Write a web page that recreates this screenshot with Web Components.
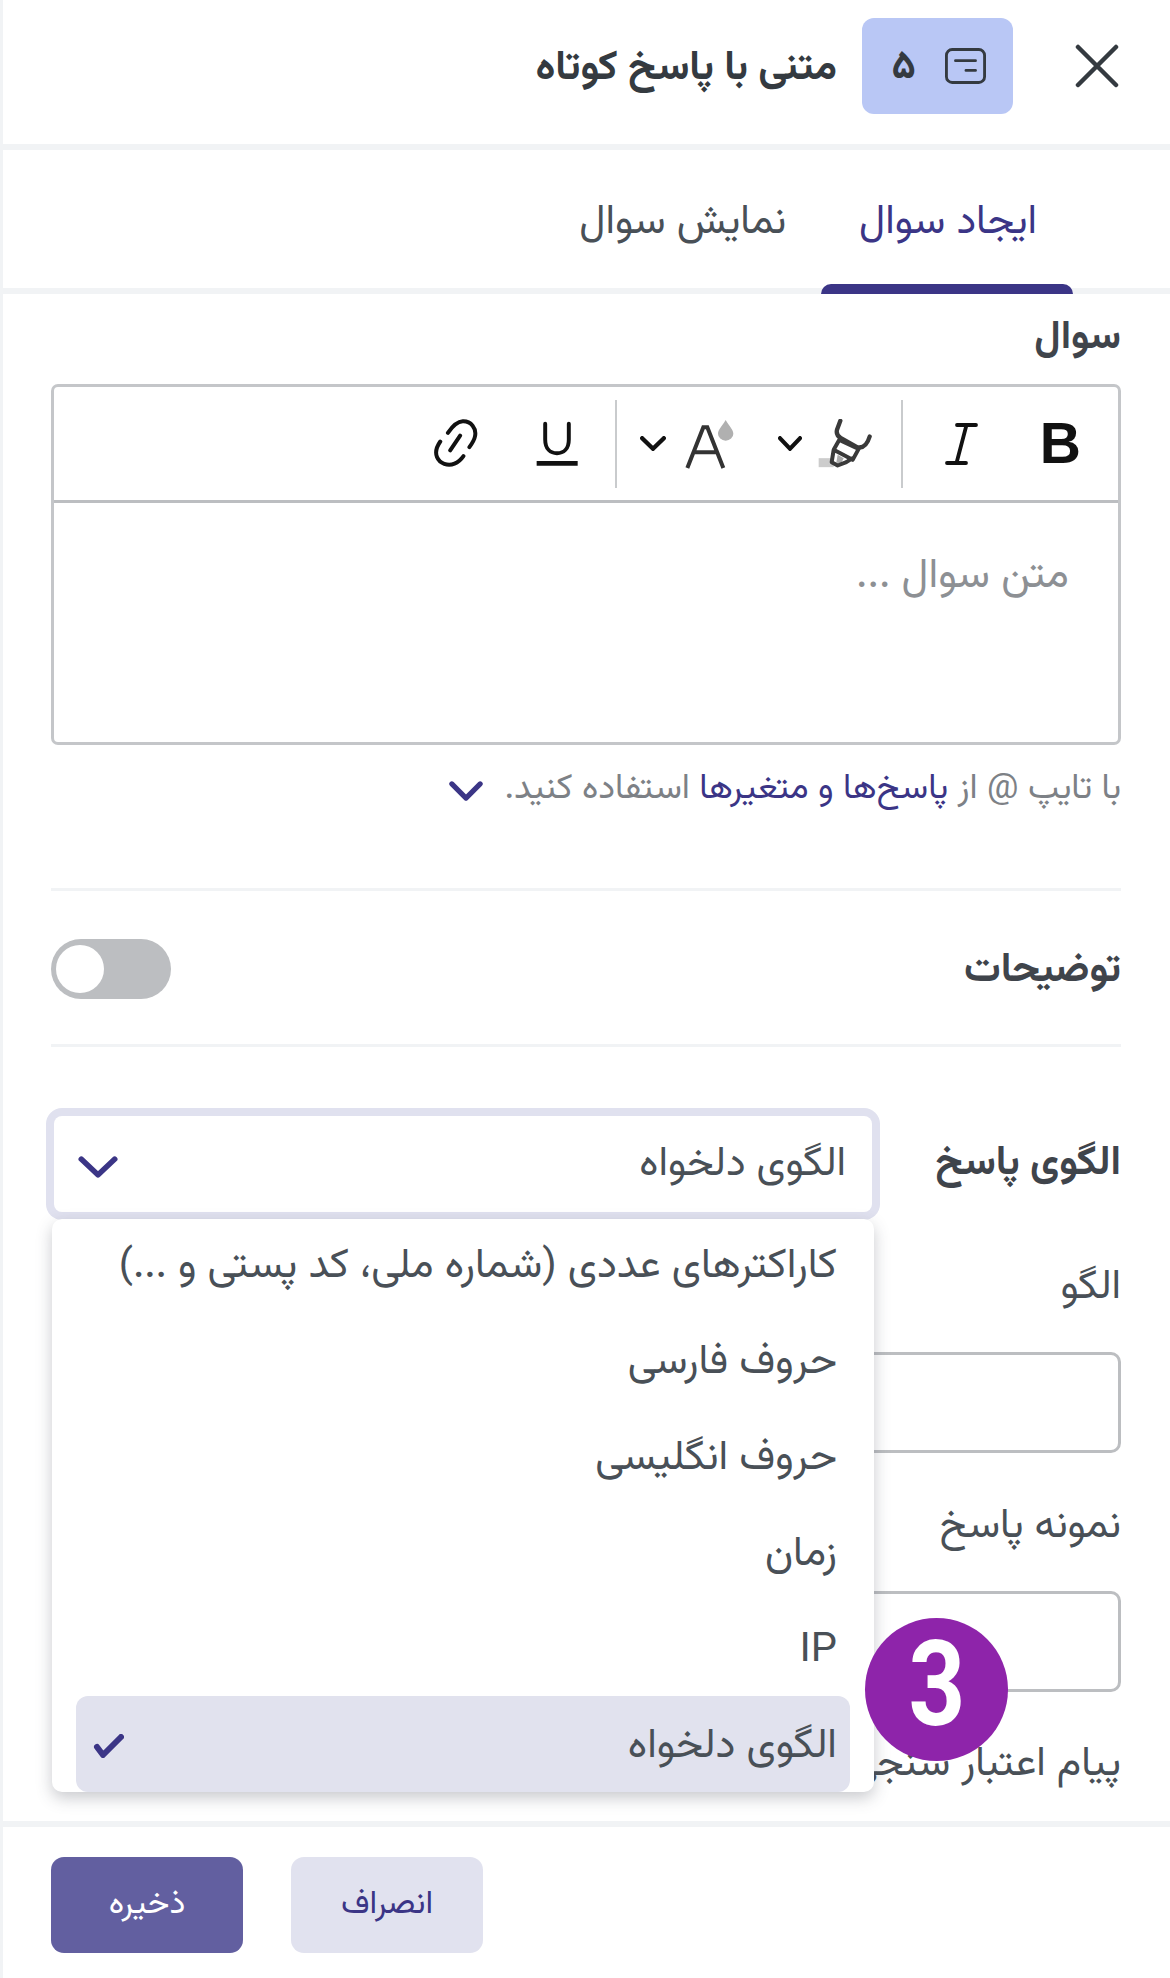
<!DOCTYPE html>
<html lang="fa" dir="rtl"><head><meta charset="utf-8"><title>Form</title>
<style>
html,body{margin:0;padding:0;background:#fff;width:1170px;height:1978px;overflow:hidden}
body{font-family:"Vazirmatn","Noto Sans Arabic",sans-serif;color:#343a40}
</style></head><body>
<x-app>
  <x-header slot="header" title="متنی با پاسخ کوتاه" num="۵"></x-header>
  <x-tabs slot="tabs" first="ایجاد سوال" second="نمایش سوال"></x-tabs>
  <x-editor label="سوال" placeholder="متن سوال ..."></x-editor>
  <x-hint></x-hint>
  <x-rule style="margin-top:77px"></x-rule>
  <x-toggle-row label="توضیحات" style="margin-top:48px"></x-toggle-row>
  <x-rule style="margin-top:45px"></x-rule>
  <x-select-row label="الگوی پاسخ" value="الگوی دلخواه" style="margin-top:69px">
    <x-option>کاراکترهای عددی (شماره ملی، کد پستی و ...)</x-option>
    <x-option>حروف فارسی</x-option>
    <x-option>حروف انگلیسی</x-option>
    <x-option>زمان</x-option>
    <x-option>IP</x-option>
    <x-option selected>الگوی دلخواه</x-option>
  </x-select-row>
  <x-field label="الگو" style="margin-top:54px"></x-field>
  <x-field label="نمونه پاسخ" style="margin-top:52px"></x-field>
  <x-field label="پیام اعتبار سنجی" style="margin-top:51px"></x-field>
  <x-footer slot="footer"></x-footer>
  <x-marker slot="overlay">3</x-marker>
</x-app>
<script>
function def(name,css,html,init){
  customElements.define(name,class extends HTMLElement{
    connectedCallback(){
      if(this.shadowRoot)return;
      const r=this.attachShadow({mode:'open'});
      const a=n=>this.getAttribute(n)||'';
      r.innerHTML='<style>'+css+'</style>'+(typeof html==='function'?html(a):html);
      if(init)init(this,r);
    }
  });
}
const chev=(w,h,c,sw,y=0)=>`<svg style="transform:translateY(${y}px)" width="${w}" height="${h}" viewBox="0 0 24 14" fill="none" stroke="${c}" stroke-width="${sw}" stroke-linecap="round" stroke-linejoin="round" preserveAspectRatio="none"><path d="M2 2l10 10L22 2"/></svg>`;

def('x-app',`
:host{display:flex;flex-direction:column;width:1170px;height:1978px;box-sizing:border-box;border-left:3px solid #f1f3f5;position:relative;background:#fff;overflow:hidden}
.body{height:1527px;overflow:hidden;box-sizing:border-box;padding:0 49px 0 48px;display:flex;flex-direction:column;flex:none}
`,`<slot name="header"></slot><slot name="tabs"></slot><div class="body"><slot></slot></div><slot name="footer"></slot><slot name="overlay"></slot>`);

def('x-header',`
:host{display:flex;align-items:center;height:144px;box-sizing:border-box;padding:0 51px 12px 0;flex:none}
.x{display:block;width:44px;height:44px}
.badge{margin-right:62px;width:151px;height:96px;border-radius:12px;background:#b9c7f5;display:flex;align-items:center;box-sizing:border-box;padding-right:27px;gap:29px;color:#343a40;font-size:40px;font-weight:700}
.num{line-height:1;transform:translateY(2px)}
.t{margin-right:25px;font-size:41px;font-weight:700;white-space:nowrap;color:#343a40;padding-top:6px}
`,a=>`
<svg class="x" viewBox="0 0 44 44" fill="none" stroke="#343a40" stroke-width="4.5" stroke-linecap="round"><path d="M3 3l38 38M41 3L3 41"/></svg>
<div class="badge"><svg width="41" height="36" viewBox="0 0 43 37" fill="none" stroke="#343a40" stroke-width="3" stroke-linecap="round" preserveAspectRatio="none"><rect x="1.5" y="1.5" width="40" height="34" rx="6"/><path d="M11 13h21M22 23h10"/></svg><span class="num">${a('num')}</span></div>
<div class="t">${a('title')}</div>`);

def('x-tabs',`
:host{display:flex;height:150px;box-sizing:border-box;border-top:6px solid #f1f3f5;border-bottom:6px solid #f1f3f5;padding-right:133px;flex:none;gap:73px}
.tab{position:relative;font-size:41px;line-height:1;display:flex;align-items:center;height:138px;padding-top:8px;box-sizing:border-box;white-space:nowrap;color:#495057}
.on{color:#3b3586}
.on::after{content:"";position:absolute;left:-38px;right:-36px;bottom:-6px;height:10px;background:#3b3586;border-radius:10px 10px 0 0}
`,a=>`<div class="tab on">${a('first')}</div><div class="tab">${a('second')}</div>`);

const tb={
 b:`<span class="b">B</span>`,
 i:`<svg width="33" height="42" viewBox="0 0 33 42" fill="none" stroke="#111" stroke-width="3.8" stroke-linecap="round"><path d="M12 2h19M2 40h19M21.500 2L11.500 40"/></svg>`,
 paint:`<svg width="54" height="49" viewBox="563 33 162 146" fill="none"><rect x="565" y="150" width="45" height="27" fill="#cccccc"/><path d="M622 140L640 150L632 167L618 163z" fill="#aaaaaa"/><path d="M630 38L620 65C617 78 622 85 632 90L680 117C700 122 712 105 718 85" stroke="#3a3a3a" stroke-width="13" stroke-linecap="round" stroke-linejoin="round"/><path d="M627 95L685 122L667 155L610 125zM610 125L604 162L622 172L648 162L667 150" stroke="#3a3a3a" stroke-width="12" stroke-linejoin="round" stroke-linecap="round"/></svg>`,
 a:`<svg width="49" height="50" viewBox="165 30 147 150"><path d="M172 177L220 55H232L280 177M190 130H265" fill="none" stroke="#333333" stroke-width="12"/><path d="M287 33C298 52 310 62 310 74A23 21 0 0 1 264 74C264 62 276 52 287 33Z" fill="#b0b0b0"/></svg>`,
 u:`<svg width="42" height="46" viewBox="350 50 128 138" fill="none" stroke="#111"><path d="M378 57V105C378 135 395 147 414 147C433 147 450 135 450 105V57" stroke-width="12" stroke-linecap="round"/><path d="M352 178H477" stroke-width="14"/></svg>`,
 link:`<svg width="45" height="49" viewBox="40 40 136 148" fill="none" stroke="#111" stroke-width="12" stroke-linecap="round"><path d="M85 82C100 60 112 48 130 47C155 46 172 68 167 92C165 104 158 114 150 125M62 108C50 125 46 140 52 155C60 175 85 183 105 175C118 170 125 162 132 152M92 135L122 90"/></svg>`
};
const sp=w=>`<span style="width:${w}px"></span>`;
def('x-editor',`
:host{display:block;flex:none}
.l{font-size:40px;font-weight:700;line-height:44px;height:44px;margin-top:22px;margin-bottom:24px;color:#3f444b}
.box{border:3px solid #c4c6c9;border-radius:7px;height:361px;box-sizing:border-box;display:flex;flex-direction:column}
.bar{height:116px;flex:none;border-bottom:3px solid #bcbec1;box-sizing:border-box;display:flex;align-items:center;padding-right:37px;position:relative}
.sep{width:2px;height:88px;background:#c9cbcd;flex:none}
.b{font:700 57px/1 "Liberation Sans",sans-serif;color:#111;width:40px;text-align:center}
.bar>*{flex:none}
.ph{padding:52px 49px 0 0;font-size:42px;line-height:44px;color:#8d9094}
`,a=>`<div class="l">${a('label')}</div><div class="box"><div class="bar">
${tb.b}${sp(63)}${tb.i}${sp(42)}<i class="sep"></i>${sp(29)}${tb.paint}${sp(16)}${chev(24,15,'#111',4)}${sp(44)}${tb.a}${sp(19)}${chev(26,15,'#111',4)}${sp(23)}<i class="sep"></i>${sp(37)}${tb.u}${sp(58)}${tb.link}
</div><div class="ph">${a('placeholder')}</div></div>`);

def('x-hint',`
:host{display:flex;align-items:center;gap:21px;margin-top:22px;height:44px;font-size:35px;color:#7d8186;white-space:nowrap;flex:none}
b{font-weight:400;color:#3b3586}
`,`<span>با تایپ @ از <b>پاسخ‌ها و متغیرها</b> استفاده کنید.</span>${chev(34,20,'#3b3586',3.6,2)}`);

def('x-rule',`:host{display:block;height:3px;background:#f1f3f5;flex:none}`,``);

def('x-toggle-row',`
:host{display:flex;align-items:center;justify-content:space-between;height:60px;flex:none}
.l{font-size:41px;font-weight:700;color:#3f444b;padding-top:3px}
.t{width:120px;height:60px;border-radius:30px;background:#bcbec1;position:relative;direction:ltr}
.t::after{content:"";position:absolute;left:5px;top:6px;width:48px;height:48px;border-radius:50%;background:#fff}
`,a=>`<div class="l">${a('label')}</div><div class="t"></div>`);

def('x-select-row',`
:host{display:flex;align-items:center;justify-content:space-between;height:96px;flex:none;position:relative;z-index:5}
.l{font-size:40.500px;font-weight:700;color:#3f444b}
.s{width:818px;height:96px;box-sizing:border-box;background:#fff;border-radius:8px;box-shadow:0 0 0 8px #e0e1ef;display:flex;align-items:center;justify-content:space-between;padding:2px 26px 0 24px;font-size:41px;color:#495057;position:relative;margin-left:3px;z-index:1}
.m{position:absolute;left:1px;top:103px;width:822px;box-sizing:border-box;background:#fff;border-radius:10px;box-shadow:0 6px 16px rgba(60,64,80,.28);padding:0 24px;z-index:2;height:573px;overflow:hidden}
`,a=>`<div class="l">${a('label')}</div><div class="s"><span>${a('value')}</span>${chev(40,22,'#3b3586',3.4,2)}</div><div class="m"><slot></slot></div>`);

def('x-option',`
:host{display:flex;align-items:center;justify-content:space-between;height:96px;box-sizing:border-box;padding:4px 13px 0 17px;font-size:41.500px;color:#495057;white-space:nowrap;border-radius:12px;transform:translateY(-3px)}
:host([selected]){background:#e1e2ee}
svg{display:block}
`,`<slot></slot><svg class="k" width="31" height="24" viewBox="0 0 31 24" fill="none" stroke="#3b3586" stroke-width="6" stroke-linecap="round" stroke-linejoin="round"><path d="M4 13l6 8L28 3"/></svg>`,(h,r)=>{if(!h.hasAttribute('selected'))r.querySelector('.k').remove();});

def('x-field',`
:host{display:block;flex:none}
.l{font-size:41px;line-height:44px;color:#495057;white-space:nowrap}
.i{margin:42px 0 0 4px;height:101px;box-sizing:border-box;border:3px solid #bcbec1;border-radius:10px}
`,a=>`<div class="l">${a('label')}</div><div class="i"></div>`);

def('x-button',`
:host{display:flex;align-items:center;justify-content:center;width:192px;height:96px;border-radius:13px;font-size:33px;background:#e1e2ef;color:#3b3586;flex:none}
:host([primary]){background:#625fa0;color:#fff}
`,`<slot></slot>`);

def('x-footer',`
:host{display:flex;height:157px;box-sizing:border-box;border-top:6px solid #f1f3f5;padding:30px 0 0 48px;gap:48px;justify-content:flex-end;flex:none}
`,`<x-button>انصراف</x-button><x-button primary>ذخیره</x-button>`);

def('x-marker',`
:host{position:absolute;left:862px;top:1618px;width:143px;height:143px;border-radius:50%;background:#8e24aa;color:#fff;display:flex;align-items:center;justify-content:center;font:700 118px/1 "Vazirmatn","Roboto",sans-serif;z-index:9;direction:ltr}
span{display:inline-block;transform:translateY(6px) scaleX(.84)}
`,`<span><slot></slot></span>`);
</script></body></html>
